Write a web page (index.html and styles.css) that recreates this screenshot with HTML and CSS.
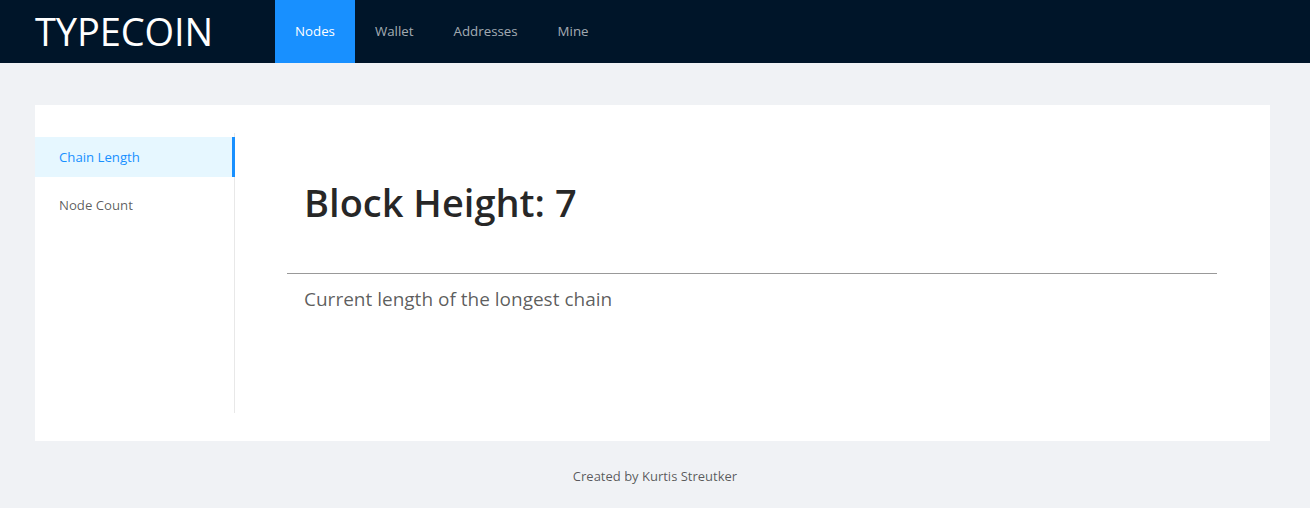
FILE: index.html
```html
<!DOCTYPE html>
<html>
<head>
<meta charset="utf-8">
<link rel="stylesheet" href="styles.css">
</head>
<body>
<header class="header">
  <div class="logo">TYPECOIN</div>
  <nav class="top-menu">
    <a class="top-item active">Nodes</a>
    <a class="top-item">Wallet</a>
    <a class="top-item">Addresses</a>
    <a class="top-item">Mine</a>
  </nav>
</header>
<main class="content">
  <div class="card">
    <aside class="sider">
      <ul class="side-menu">
        <li class="side-item selected">Chain Length</li>
        <li class="side-item">Node Count</li>
      </ul>
    </aside>
    <section class="main">
      <div class="jumbo">
        <h1 class="title">Block Height: 7</h1>
      </div>
      <hr class="rule">
      <p class="lead">Current length of the longest chain</p>
    </section>
  </div>
</main>
<footer class="footer">Created by Kurtis Streutker</footer>
</body>
</html>
```
FILE: styles.css
```css
* { box-sizing: border-box; }
html, body { margin: 0; padding: 0; }
body {
  background: #f0f2f5;
  font-family: "Open Sans", "Noto Sans", sans-serif;
  color: rgba(0,0,0,0.65);
  font-size: 14px;
  width: 1310px;
  height: 508px;
  overflow: hidden;
}
.header {
  height: 63px;
  background: #001529;
  display: flex;
  align-items: stretch;
}
.logo {
  width: 275px;
  padding-left: 35px;
  color: #fff;
  font-size: 38px;
  line-height: 63px;
  letter-spacing: -0.1px;
}
.top-menu { display: flex; }
.top-item {
  padding: 0 20px;
  line-height: 63px;
  color: rgba(255,255,255,0.65);
  font-size: 13.3px;
}
.top-item.active {
  background: #1890ff;
  color: #fff;
}
.content { padding: 42px 40px 0 35px; }
.card {
  background: #fff;
  display: flex;
  padding: 28px 0;
  height: 336px;
}
.sider {
  width: 200px;
  flex: none;
  border-right: 1px solid #e8e8e8;
}
.side-menu {
  list-style: none;
  margin: 0;
  padding: 4px 0 0;
}
.side-item {
  height: 40px;
  line-height: 40px;
  padding-left: 24px;
  margin-bottom: 8px;
  font-size: 13.2px;
  color: rgba(0,0,0,0.65);
  margin-right: -1px;
}
.side-item.selected {
  background: #e6f7ff;
  color: #1890ff;
  border-right: 3px solid #1890ff;
}
.main {
  flex: 1;
  padding: 0 53px 0 52px;
}
.jumbo { padding: 44px 17px 46px; }
.title {
  margin: 0;
  font-size: 38px;
  font-weight: 600;
  color: rgba(0,0,0,0.85);
  line-height: 50px;
}
.rule {
  margin: 0;
  border: 0;
  border-top: 1px solid #999;
  height: 0;
}
.lead {
  margin: 12px 0 0;
  padding-left: 17px;
  font-size: 19px;
  line-height: 26px;
  color: rgba(0,0,0,0.65);
}
.footer {
  text-align: center;
  padding-top: 26px;
  font-size: 13px;
  color: rgba(0,0,0,0.65);
}
```
